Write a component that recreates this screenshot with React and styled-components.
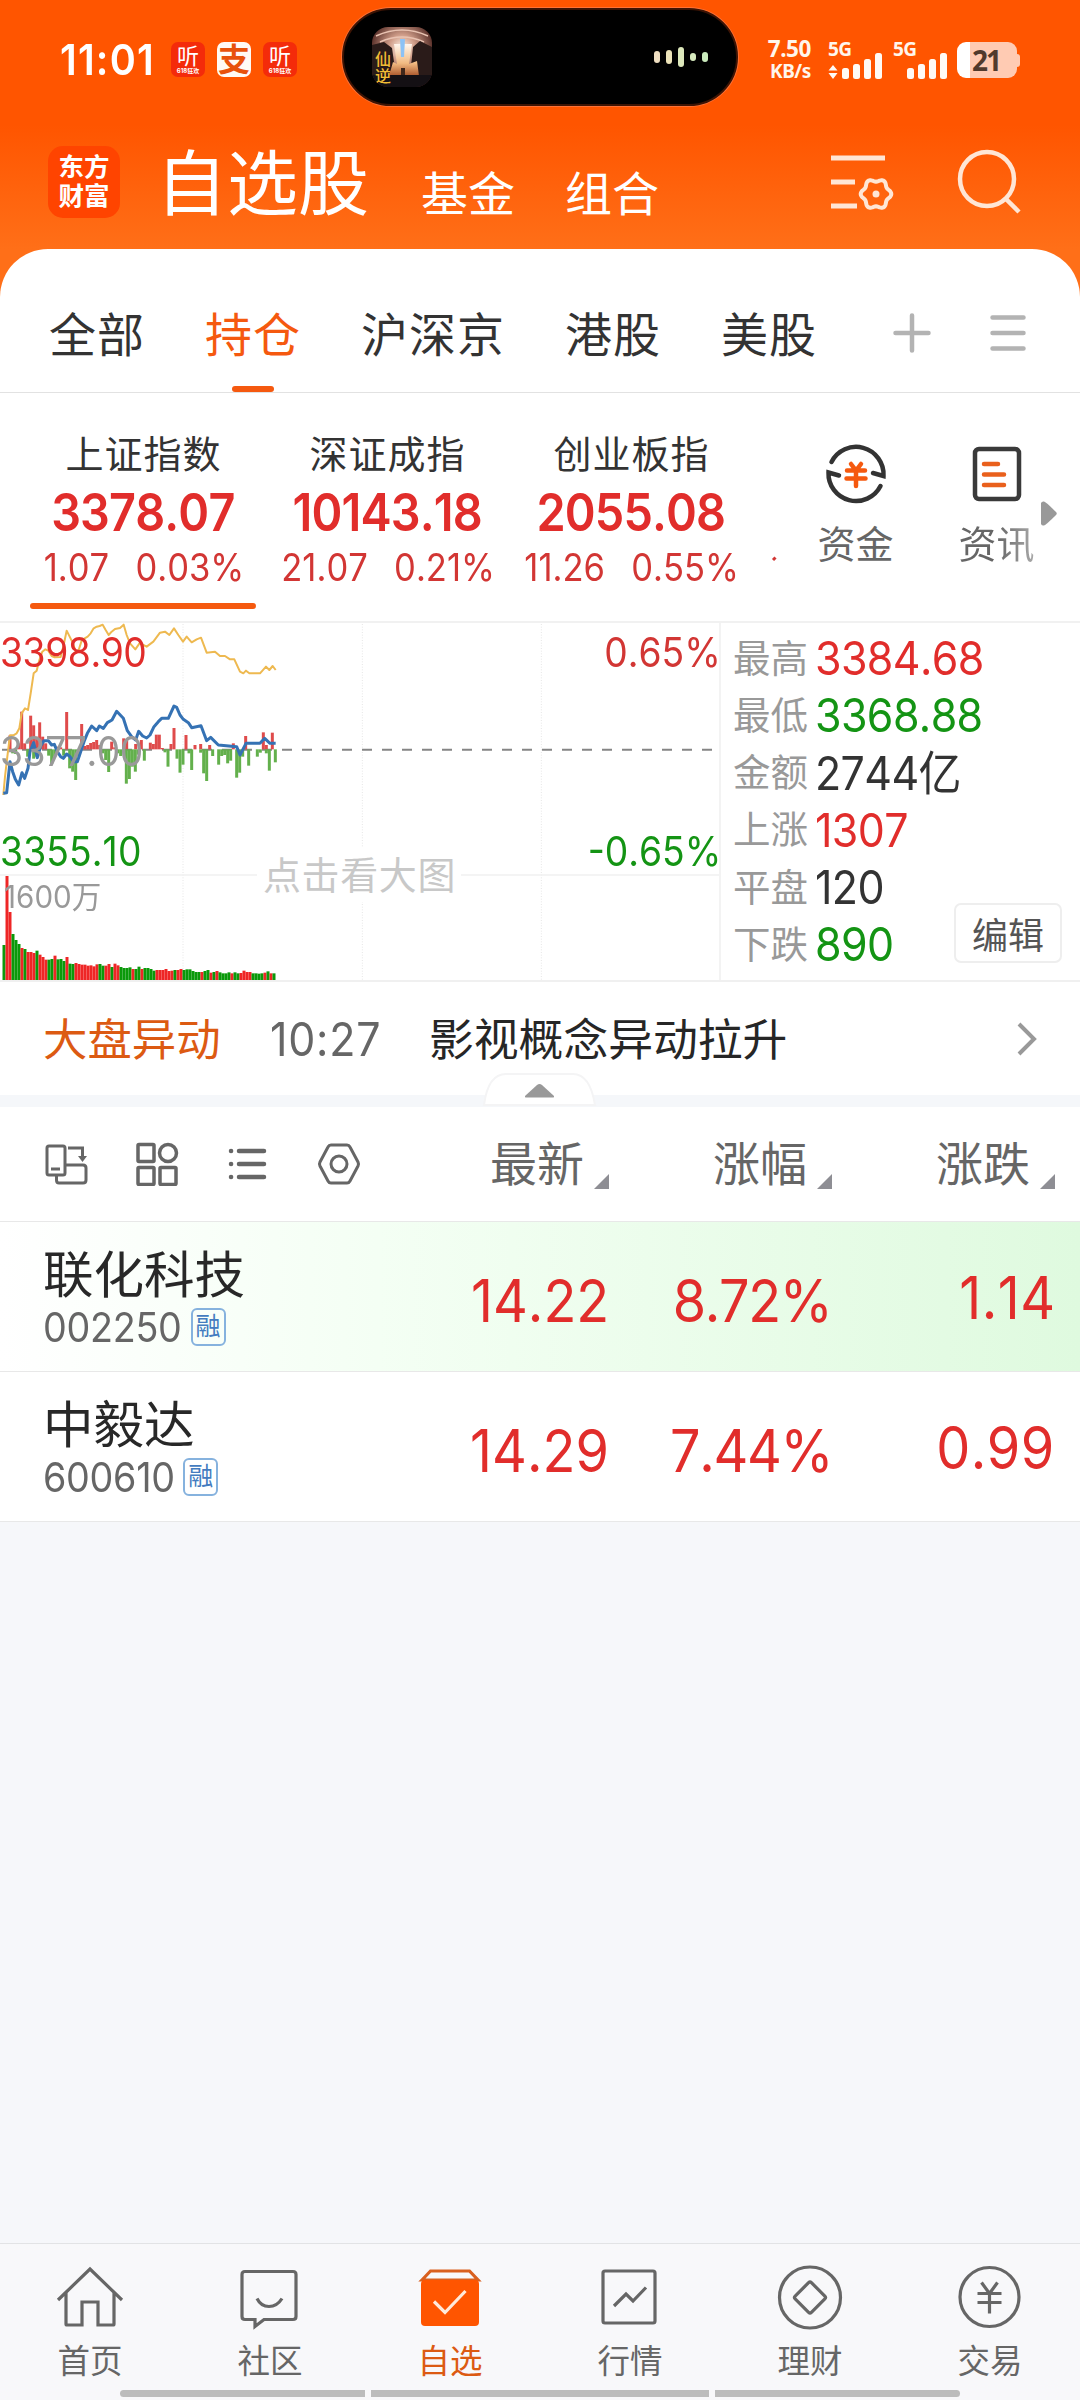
import React, { useState } from 'react';
import styled, { createGlobalStyle, css } from 'styled-components';

const RED = '#e12d2b';
const GREEN = '#149414';
const ORANGE = '#f5590f';

const GlobalStyle = createGlobalStyle`
  * {
    box-sizing: border-box;
  }

  body {
    margin: 0;
    background: #f6f7fa;
    font-family: 'Inter', 'Noto Sans CJK SC', sans-serif;
    line-height: 1;
    color: #333;
  }

  svg {
    display: block;
    flex: none;
  }
`;

const Screen = styled.div`
  width: 1080px;
  height: 2400px;
  display: flex;
  flex-direction: column;
  overflow: hidden;
  white-space: nowrap;
`;

// Condensed figures used for every price and percentage
const Num = styled.span`
  display: inline-block;
  font-size: ${props => props.$size}px;
  font-weight: ${props => props.$weight || 400};
  font-kerning: none;
  letter-spacing: ${props => props.$spacing ?? 0}em;
  color: ${props => props.$color || 'inherit'};
  transform: scaleX(${props => props.$scale || 0.92});
  transform-origin: ${props => props.$origin || 'left'} center;
`;

// Header
const Header = styled.header`
  height: 249px;
  flex: none;
  background: linear-gradient(#ff5500 0, #ff5500 125px, #ff6f18 249px);
  color: white;
`;

const StatusBar = styled.div`
  height: 114px;
  display: grid;
  grid-template-columns: 342px 396px 342px;
  align-items: center;
`;

const StatusLeft = styled.div`
  display: flex;
  align-items: center;
  gap: 12px;
  padding: 5px 0 0 60px;
`;

const Time = styled.div`
  width: 99px;
`;

const NoticeIcon = styled.div`
  width: 34px;
  height: 35px;
  border-radius: 7px;
  display: flex;
  flex-direction: column;
  align-items: center;
  justify-content: center;
  gap: 1px;
  background: ${props => (props.$pay ? '#fffaf5' : '#f42b0a')};
  color: ${props => (props.$pay ? '#e8520c' : 'white')};
  font-size: ${props => (props.$pay ? 32 : 22)}px;
  font-weight: ${props => (props.$pay ? 700 : 400)};

  small {
    font-size: 6px;
    font-weight: 700;
    line-height: 6px;
  }
`;

const Island = styled.div`
  height: 98px;
  border-radius: 49px;
  background: #000;
  border: 2px solid #3d1404;
  box-shadow: 0 0 0 1px #ff7236;
  display: flex;
  align-items: center;
  justify-content: space-between;
  padding: 0 28px;
`;

const StatusRight = styled.div`
  display: flex;
  align-items: flex-start;
  padding: 5px 0 0 29px;
  font-family: 'Noto Sans', sans-serif;
  font-weight: 700;
  color: #fff6ec;
`;

const NetSpeed = styled.div`
  width: 44px;
  height: 36px;
  margin: -2px 17px 0 0;
  display: flex;
  flex-direction: column;
  align-items: flex-end;
  gap: 4px;
  font-size: 22.5px;
  line-height: 18px;
  letter-spacing: -0.4px;

  small {
    font-size: 19px;
    line-height: 18px;
  }
`;

const Signal = styled.div`
  width: 65px;
  height: 36px;
  font-size: 19px;
  line-height: 15px;
  letter-spacing: -0.6px;

  svg {
    margin-top: -4px;
  }
`;

const Battery = styled.div`
  width: 60px;
  height: 36px;
  margin-left: -1px;
  border-radius: 9px;
  background: linear-gradient(90deg, #fff 13px, #ffcbb3 13px);
  color: #523a2c;
  font-size: 28px;
  line-height: 36px;
  padding-left: 15px;
  letter-spacing: -2px;
`;

const BatteryTip = styled.div`
  width: 3px;
  height: 13px;
  margin-top: 12px;
  border-radius: 0 3px 3px 0;
  background: #ffcbb3;
`;

const TitleBar = styled.div`
  height: 135px;
  display: flex;
  align-items: center;
  padding: 0 59px 0 48px;
`;

const Logo = styled.div`
  width: 72px;
  height: 72px;
  margin-right: 36px;
  border-radius: 15px;
  background: #ff4400;
  font-size: 25.5px;
  font-weight: 700;
  line-height: 29px;
  text-align: center;
  padding-top: 6px;
`;

const PageTitle = styled.h1`
  margin: 3px 0 0;
  width: 265px;
  font-size: 71px;
  font-weight: 400;
  line-height: 80px;
`;

const TitleLink = styled.span`
  width: 144px;
  padding-top: 24px;
  font-size: 47px;
  line-height: 50px;
`;

const TitleActions = styled.div`
  margin-left: auto;
  display: flex;
  align-items: center;
  gap: 63px;
`;

// Group tabs
const Card = styled.main`
  flex: none;
  background: linear-gradient(#ff6f18, #ff6f18) top / 100% 48px no-repeat;
`;

const Tabs = styled.nav`
  height: 144px;
  padding: 0 54px 0 49px;
  display: flex;
  align-items: stretch;
  gap: 60px;
  background: white;
  border-radius: 48px 48px 0 0;
  border-bottom: 1px solid #e2e2e2;
`;

const Tab = styled.div`
  display: flex;
  flex-direction: column;
  align-items: center;
  padding-top: 61px;
  font-size: 47px;
  line-height: 50px;
  letter-spacing: 1px;
  cursor: pointer;
  color: ${props => (props.$active ? ORANGE : '#333')};

  &::after {
    content: '';
    width: 42px;
    height: 6px;
    margin-top: 26px;
    border-radius: 3px;
    background: ${props => (props.$active ? ORANGE : 'transparent')};
  }
`;

const TabActions = styled.div`
  display: flex;
  align-items: center;
  gap: 59px;
  margin-left: auto;
  padding-top: 24px;
`;

// Indices
const IndexStrip = styled.section`
  height: 228px;
  display: flex;
  background: white;
  padding-left: 21px;
`;

const IndexCell = styled.div`
  width: 244px;
  display: flex;
  flex-direction: column;
  align-items: center;
  padding-top: 40px;
  font-size: 38px;
  line-height: 42px;

  &::after {
    content: '';
    width: 226px;
    height: 6px;
    margin-top: 17px;
    border-radius: 3px;
    background: ${props => (props.$active ? ORANGE : 'transparent')};
  }
`;

const IndexName = styled.div`
  letter-spacing: 1px;
  padding-left: 1px;
`;

const IndexValue = styled.div`
  height: 50px;
  margin-top: 13px;
  line-height: 50px;
`;

const IndexChange = styled.div`
  height: 38px;
  margin-top: 10px;
  padding-left: 2px;
  line-height: 38px;
  word-spacing: 18px;
`;

const NextIndex = styled.svg`
  margin: 162px 0 0 18px;
`;

const Shortcut = styled.div`
  width: 141px;
  display: flex;
  flex-direction: column;
  align-items: center;
  gap: 18px;
  padding-top: 49px;
  font-size: 38px;
  line-height: 40px;
  color: #666;
`;

const FadedText = styled.span`
  background: linear-gradient(90deg, #666 50%, #aaa);
  background-clip: text;
  color: transparent;
`;

const Shortcuts = styled.div`
  display: flex;
  margin-left: 8px;
`;

const MoreArrow = styled.svg`
  margin: 108px 0 0 -26px;
`;

// Intraday chart and market stats
const Market = styled.section`
  height: 361px;
  display: flex;
  background: white;
  border-top: 2px solid #f1f1f1;
  border-bottom: 2px solid #f0f0f0;
`;

const ChartBox = styled.div`
  position: relative;
  width: 721px;
  border-right: 2px solid #f3f3f3;
`;

const ChartLabel = styled.div`
  position: absolute;
  top: ${props => props.$top}px;
  ${props =>
    props.$right
      ? css`
          right: -2px;
        `
      : css`
          left: ${props.$left || 0}px;
        `}
  line-height: 40px;
`;

const Hint = styled.div`
  position: absolute;
  left: 257px;
  top: 225px;
  width: 204px;
  padding: 6px;
  background: white;
  color: #c8c8c8;
  font-size: 38px;
  line-height: 42px;
  letter-spacing: 0.6px;
`;

const Stats = styled.div`
  flex: 1;
  padding: 7px 0 0 12px;
  position: relative;
`;

const StatRow = styled.div`
  height: 57.2px;
  display: flex;
  align-items: center;
  gap: 7px;
  font-size: 37.5px;
  color: #999;
`;

const EditButton = styled.button`
  position: absolute;
  right: 18px;
  bottom: 17px;
  width: 108px;
  height: 60px;
  padding: 0;
  border: 2px solid #eee;
  border-radius: 7px;
  background: white;
  color: #555;
  font-family: inherit;
  font-size: 36px;
`;

// Market alert
const Alert = styled.section`
  height: 113px;
  display: flex;
  align-items: center;
  padding: 2px 43px 0 43px;
  background: white;
  font-size: 44.8px;
  line-height: 50px;
  color: #262626;
`;

const AlertTag = styled.span`
  width: 227px;
  font-size: 44.4px;
  color: #dc5a12;
`;

const AlertTime = styled.span`
  width: 159px;
`;

const Chevron = styled.svg`
  margin: -2px 0 0 auto;
`;

const Band = styled.div`
  height: 12px;
  background: #f5f7fa;
  position: relative;
`;

const Collapse = styled.svg`
  position: absolute;
  left: 482px;
  top: -23px;
`;

// Stock table
const columns = css`
  display: grid;
  grid-template-columns: 386px 223px 223px 223px;
`;

const TableHead = styled.div`
  ${columns}
  height: 115px;
  align-items: center;
  background: white;
  border-bottom: 1px solid #e8e8e8;
`;

const ToolIcons = styled.div`
  display: flex;
  gap: 47px;
  padding-left: 44px;
`;

const HeadCell = styled.div`
  display: flex;
  justify-content: flex-end;
  align-items: flex-end;
  gap: 10px;
  font-size: 47px;
  line-height: 52px;
  color: #666;
`;

const SortMark = styled.svg`
  margin-bottom: 1px;
`;

const StockRow = styled.div`
  ${columns}
  height: 150px;
  border-bottom: 1px solid #e8e8e8;
  background: ${props => (props.$flash ? 'linear-gradient(90deg, #fff, #f4fff4 35%, #dffadf)' : 'white')};
`;

const StockName = styled.div`
  padding: 25px 0 0 43px;
  font-size: 50.5px;
  line-height: 56px;
  color: #282828;
`;

const StockCode = styled.div`
  display: flex;
  align-items: center;
  height: 42px;
  margin-top: 3px;
  font-size: 41px;
  line-height: 42px;
  color: #666;
`;

const Badge = styled.span`
  width: 35px;
  height: 38px;
  margin-left: -3px;
  border: 2px solid #86b2de;
  border-radius: 6px;
  color: #447cc0;
  font-size: 25px;
  line-height: 33px;
  text-align: center;
`;

const Price = styled.div`
  padding-top: ${props => (props.$raised ? 46 : 49)}px;
  text-align: right;
  line-height: 59px;
`;

// Bottom navigation
const BottomNav = styled.footer`
  height: 157px;
  flex: none;
  margin-top: auto;
  display: flex;
  flex-direction: column;
  align-items: center;
  border-top: 1px solid #e2e3e5;
  background: #f8f8fa;
`;

const NavItems = styled.div`
  display: grid;
  grid-template-columns: repeat(6, 180px);
  height: 146px;
`;

const NavItem = styled.div`
  display: flex;
  flex-direction: column;
  align-items: center;
  padding-top: 18px;
  gap: 10px;
  font-size: 32.5px;
  line-height: 36px;
  cursor: pointer;
  color: ${props => (props.$active ? '#dc5a12' : '#666')};
`;

const HomeBar = styled.div`
  display: flex;
  gap: 6px;

  i {
    width: 245px;
    height: 7px;
    background: #bcbcbc;
  }

  i:nth-child(2) {
    width: 338px;
  }

  i:first-child {
    border-radius: 4px 0 0 4px;
  }

  i:last-child {
    border-radius: 0 4px 4px 0;
  }
`;

const TABS = ['全部', '持仓', '沪深京', '港股', '美股'];

const INDICES = [
  { name: '上证指数', value: '3378.07', change: '1.07', percent: '0.03%' },
  { name: '深证成指', value: '10143.18', change: '21.07', percent: '0.21%' },
  { name: '创业板指', value: '2055.08', change: '11.26', percent: '0.55%' }
];

const STATS = [
  { label: '最高', value: '3384.68', color: RED },
  { label: '最低', value: '3368.88', color: GREEN },
  { label: '金额', value: '2744', unit: '亿', color: '#333' },
  { label: '上涨', value: '1307', color: RED },
  { label: '平盘', value: '120', color: '#333' },
  { label: '下跌', value: '890', color: GREEN }
];

const STOCKS = [
  { name: '联化科技', code: '002250', price: '14.22', percent: '8.72%', change: '1.14', flash: true },
  { name: '中毅达', code: '600610', price: '14.29', percent: '7.44%', change: '0.99' }
];

// Intraday series, in thirds of a pixel
const AVERAGE_LINE =
  '10,555 15,500 22,440 30,376 40,376 50,370 58,355 65,310 75,295 84,300 92,250 101,190 110,182 118,150 127,125 136,118 145,122 155,138 164,142 182,141 191,105 200,62 209,80 218,98 227,125 236,120 245,92 254,85 263,80 272,70 281,55 290,50 299,48 308,44 317,60 326,75 335,65 345,57 360,54 371,44 380,75 390,100 406,118 420,98 430,105 440,110 460,95 480,68 495,65 508,75 522,55 535,75 549,95 560,80 575,97 590,88 603,83 620,128 645,125 660,138 675,138 690,148 703,148 720,185 730,190 738,182 748,190 780,190 798,170 808,180 818,168 827,180';
const PRICE_LINE =
  '10,550 20,548 30,455 38,485 46,508 56,525 66,488 74,505 84,475 90,425 101,398 112,443 122,408 132,392 145,392 155,405 163,403 172,425 182,440 190,445 200,432 210,440 220,455 232,455 242,425 252,395 262,370 275,348 290,362 298,348 310,355 322,338 336,330 350,304 370,325 382,362 395,380 407,390 416,364 428,378 440,384 450,375 462,350 475,335 485,325 505,325 522,288 530,292 540,315 550,328 565,338 575,353 603,347 620,392 632,382 655,405 710,410 720,435 738,400 780,400 794,385 810,400 827,400';

const STRENGTH = [
  [30, 376], [56, 400], [65, 305], [74, 400], [92, 317], [101, 346], [110, 380], [119, 337], [128, 380], [137, 400],
  [173, 410], [182, 412], [200, 306], [245, 342], [254, 408], [263, 405], [272, 399], [281, 396], [290, 390], [299, 405],
  [335, 395], [344, 412], [371, 385], [380, 390], [407, 402], [424, 390], [451, 398], [460, 402], [469, 374], [478, 374],
  [487, 414], [513, 402], [522, 354], [558, 375], [585, 405], [602, 402], [629, 405], [700, 400], [737, 378],
  [790, 367], [799, 405], [817, 368],
  [38, 430], [47, 432], [83, 440], [101, 446], [110, 440], [146, 437], [155, 462], [164, 440], [191, 437], [209, 475],
  [218, 485], [227, 510], [236, 440], [308, 430], [317, 450], [326, 486], [353, 430], [362, 438], [379, 521], [388, 507],
  [397, 470], [406, 485], [415, 434], [433, 452], [495, 427], [504, 470], [531, 446], [540, 488], [549, 464],
  [567, 430], [575, 480], [602, 428], [611, 490], [620, 513], [638, 438], [656, 464], [665, 438], [674, 435],
  [683, 460], [692, 452], [710, 503], [719, 488], [728, 440], [746, 467], [772, 440], [781, 428], [799, 430],
  [808, 482], [826, 457]
];

const VOLUME = [
  105, 312, 204, 138, 120, 108, 96, 93, 84, 84, 81, 88, 76, 69, 61, 61, 63, 73, 62, 63, 57, 69, 49, 48, 51, 48, 46, 46,
  43, 44, 41, 47, 48, 43, 43, 48, 39, 49, 44, 39, 36, 36, 38, 33, 33, 40, 33, 36, 36, 33, 28, 30, 30, 30, 33, 27, 28,
  30, 30, 33, 30, 32, 32, 27, 24, 24, 24, 27, 30, 22, 24, 27, 23, 20, 20, 23, 20, 23, 20, 21, 28, 24, 24, 20, 20, 19,
  20, 22, 26, 20, 20
];
const VOLUME_SIDES =
  'grrgggrgrrrgrrrggrgggrggrrrrrrrrggrrgrrggggrggrggggrrrrrrgrrggggggrggrgrggggrggrrrrggggrgrg';

const IntradayChart = () => (
  <svg width="719" height="357" viewBox="0 39 2157 1071">
    <g stroke="#e6e6e6" strokeWidth="3" strokeDasharray="3 5">
      <path d="M549 42V1110M1087 42V1110M1624 42V1110" />
    </g>
    <path d="M0 795H2157" stroke="#f0f0f0" strokeWidth="5" />
    <path d="M0 419H2157" stroke="#858585" strokeWidth="6" strokeDasharray="30 30" strokeDashoffset="-6" />
    {STRENGTH.map(([x, y], i) => (
      <path key={i} d={`M${x} 418V${y}`} stroke={y < 418 ? '#df4b4b' : '#63b04c'} strokeWidth="9" />
    ))}
    {VOLUME.map((height, i) => (
      <path
        key={i}
        d={`M${12 + i * 9} 1110v-${height}`}
        stroke={VOLUME_SIDES[i] === 'r' ? '#ee2626' : '#0a990a'}
        strokeWidth="9"
      />
    ))}
    <polyline points={AVERAGE_LINE} fill="none" stroke="#eeb950" strokeWidth="6" strokeLinejoin="round" />
    <polyline points={PRICE_LINE} fill="none" stroke="#3572b4" strokeWidth="9" strokeLinejoin="round" />
  </svg>
);

const SignalBars = ({ arrows }) => (
  <svg width="56" height="26" viewBox="0 0 56 26" fill="#fffaf5">
    {arrows && <path d="M5 12l4.500 5.500h-9zM5 26l4.500-6h-9z" />}
    <rect x="14" y="15" width="7" height="11" rx="2.500" />
    <rect x="25" y="11" width="7" height="15" rx="2.500" />
    <rect x="36" y="6" width="7" height="20" rx="2.500" />
    <rect x="47" y="0" width="7" height="26" rx="2.500" />
  </svg>
);

const CoverArt = () => (
  <svg width="60" height="60" viewBox="0 0 60 60">
    <defs>
      <clipPath id="cover">
        <rect width="60" height="60" rx="16" />
      </clipPath>
      <radialGradient id="glow" cx="0.5" cy="0.35" r="0.55">
        <stop offset="0" stopColor="#fff4e8" />
        <stop offset="0.4" stopColor="#cf9c88" />
        <stop offset="1" stopColor="#4c241f" />
      </radialGradient>
      <linearGradient id="fire" x1="0" y1="0" x2="0" y2="1">
        <stop offset="0" stopColor="#fff6ee" />
        <stop offset="0.6" stopColor="#f2bb82" />
        <stop offset="1" stopColor="#a9552a" />
      </linearGradient>
    </defs>
    <g clipPath="url(#cover)">
      <rect width="60" height="60" fill="url(#glow)" />
      <path d="M4 9q26-12 52 0M8 15q22-10 44 0" fill="none" stroke="#e9c3b2" strokeWidth="1.500" />
      <path d="M0 18l12-3 8 6 4 28H0zM60 20l-12-6-7 6-3 29h22z" fill="#2a1b19" />
      <path d="M22 17h18l-3 20 8-3 2 15H17l4-14 4 2z" fill="url(#fire)" />
      <path d="M28 12h5l-1 18h-3z" fill="#8cc2f5" />
      <path d="M0 48h60v12H0z" fill="#141014" />
      <path d="M29 41h4v7h-4z" fill="#40271a" />
      <g fill="#f2bd35" fontSize="16" fontWeight="500">
        <text x="3" y="38">仙</text>
        <text x="3" y="55">逆</text>
      </g>
    </g>
  </svg>
);

const SoundWave = () => (
  <svg width="54" height="20" viewBox="0 0 54 20">
    <rect x="0" y="4" width="6" height="12" rx="3" fill="#f0dfc2" />
    <rect x="12" y="3" width="6" height="14" rx="3" fill="#ece3b9" />
    <rect x="24" y="0" width="6" height="20" rx="3" fill="#dde8bb" />
    <rect x="36" y="6" width="6" height="8" rx="3" fill="#d6e9bd" />
    <rect x="48" y="5" width="6" height="10" rx="3" fill="#cbebbd" />
  </svg>
);

// Six-lobed gear outline
const GEAR_POINTS = Array.from({ length: 72 }, (_, i) => {
  const angle = (i * Math.PI) / 36;
  const radius = 13.8 + 1.5 * Math.cos(6 * angle);
  return `${(45 + radius * Math.cos(angle)).toFixed(2)},${(44 + radius * Math.sin(angle)).toFixed(2)}`;
}).join(' ');

const NAV_ITEMS = [
  { label: '首页', icon: <path d="M4 38L36 7l32 31M12 31v31q0 1 1 1h15V40h16v23h15q1 0 1-1V31" /> },
  {
    label: '社区',
    icon: (
      <path d="M11 9.500h48q3 0 3 3v42q0 3-3 3H30L21 64.500V57.500H11q-3 0-3-3v-42q0-3 3-3zM23 36.500q4 8 12 8t13-8" />
    )
  },
  {
    label: '自选',
    icon: (
      <>
        <path d="M8 18l8.500-9h39L64 18z" stroke="#d9601f" fill="#f8f8fa" />
        <rect x="7" y="18" width="58" height="46" rx="4" fill="#ff5500" stroke="none" />
        <path d="M20 39.500L31 50.500L51.500 29" stroke="#ffeada" />
      </>
    )
  },
  {
    label: '行情',
    icon: (
      <>
        <rect x="9" y="9" width="52" height="52" rx="2" />
        <path d="M20 44l12-12 7 7 13-13.500" />
      </>
    )
  },
  {
    label: '理财',
    icon: (
      <>
        <circle cx="36" cy="35.500" r="30.500" />
        <rect x="24.500" y="24" width="23" height="23" rx="2" transform="rotate(45 36 35.500)" />
      </>
    )
  },
  {
    label: '交易',
    icon: (
      <>
        <circle cx="35.500" cy="35" r="29.500" />
        <path d="M27.500 20.500l8 11 8-11M23.500 31.500h24M23.500 40.500h24M35.500 31v20.500" />
      </>
    )
  }
];

const App = () => {
  const [activeTab, setActiveTab] = useState('持仓');
  const [activeNav, setActiveNav] = useState('自选');

  return (
    <Screen lang="zh-CN">
      <GlobalStyle />
      <Header>
        <StatusBar>
          <StatusLeft>
            <Time>
              <Num $size={43} $weight={600} $spacing={0.03}>11:01</Num>
            </Time>
            <NoticeIcon>听<small>618狂欢</small></NoticeIcon>
            <NoticeIcon $pay>支</NoticeIcon>
            <NoticeIcon>听<small>618狂欢</small></NoticeIcon>
          </StatusLeft>
          <Island>
            <CoverArt />
            <SoundWave />
          </Island>
          <StatusRight>
            <NetSpeed>
              7.50
              <small>KB/s</small>
            </NetSpeed>
            <Signal>
              5G
              <SignalBars arrows />
            </Signal>
            <Signal>
              5G
              <SignalBars />
            </Signal>
            <Battery>21</Battery>
            <BatteryTip />
          </StatusRight>
        </StatusBar>

        <TitleBar>
          <Logo>东方<br />财富</Logo>
          <PageTitle>自选股</PageTitle>
          <TitleLink>基金</TitleLink>
          <TitleLink>组合</TitleLink>
          <TitleActions>
            <svg width="63" height="64" viewBox="0 0 63 64" fill="none" stroke="#ffe6d5" strokeWidth="5">
              <path d="M0 8h54M0 32h24M0 56h26" />
              <polygon points={GEAR_POINTS} strokeWidth="4" strokeLinejoin="round" />
              <circle cx="45" cy="44" r="3.500" fill="#ffe6d5" stroke="none" />
            </svg>
            <svg width="64" height="66" viewBox="0 0 64 66" fill="none" stroke="#ffe6d5" strokeWidth="4.500">
              <circle cx="30" cy="30" r="27" />
              <path d="M48 49l14 14" />
            </svg>
          </TitleActions>
        </TitleBar>
      </Header>

      <Card>
        <Tabs>
          {TABS.map(tab => (
            <Tab key={tab} $active={tab === activeTab} onClick={() => setActiveTab(tab)}>
              {tab}
            </Tab>
          ))}
          <TabActions>
            <svg width="38" height="40" viewBox="0 0 38 40" stroke="#b3b3b3" strokeWidth="4.500" strokeLinecap="round">
              <path d="M2.500 20h33M19 2.500v35" />
            </svg>
            <svg width="36" height="40" viewBox="0 0 36 40" stroke="#b3b3b3" strokeWidth="4.500" strokeLinecap="round">
              <path d="M2.500 4.500h31M2.500 20h31M2.500 35.500h31" />
            </svg>
          </TabActions>
        </Tabs>

        <IndexStrip>
          {INDICES.map((item, i) => (
            <IndexCell key={item.name} $active={i === 0}>
              <IndexName>{item.name}</IndexName>
              <IndexValue>
                <Num $size={52} $weight={600} $color={RED} $origin="center" $scale={0.9} $spacing={-0.018}>
                  {item.value}
                </Num>
              </IndexValue>
              <IndexChange>
                <Num $size={37.6} $color="#d23634" $origin="center">{item.change} {item.percent}</Num>
              </IndexChange>
            </IndexCell>
          ))}
          <NextIndex width="6" height="8" viewBox="0 0 6 8">
            <path d="M2 5l2.500-2.500" stroke="#d23634" strokeWidth="3" />
          </NextIndex>
          <Shortcuts>
            <Shortcut>
              <svg width="64" height="64" viewBox="0 0 64 64" fill="none" stroke="#333" strokeWidth="4.500" strokeLinecap="round">
                <path d="M7.500 20A27.500 27.500 0 0 1 59.500 34L49 31" strokeLinejoin="miter" />
                <path d="M56.500 44A27.500 27.500 0 0 1 4.500 30.500L15 33.500" />
                <path d="M27 22l5 6.500 5-6.500M23 28.500h18M22.500 36.500h19M32 28v16" stroke={ORANGE} />
              </svg>
              资金
            </Shortcut>
            <Shortcut>
              <svg width="64" height="64" viewBox="0 0 64 64" fill="none" strokeWidth="4.500" strokeLinecap="round">
                <rect x="10" y="7" width="44" height="50" rx="4" stroke="#3a3a3a" />
                <path d="M19 22h14M19 32.500h20M19 43h20" stroke="#e9601c" />
              </svg>
              <FadedText>资讯</FadedText>
            </Shortcut>
          </Shortcuts>
          <MoreArrow width="16" height="25" viewBox="0 0 16 25" fill="#999">
            <path d="M0 2q1-2 3-1.500Q5 1 15 11q1.500 1.500 0 3Q5 24 3 24.500Q1 25 0 23z" />
          </MoreArrow>
        </IndexStrip>

        <Market>
          <ChartBox>
            <IntradayChart />
            <ChartLabel $top={10}><Num $size={40.5} $color={RED} $spacing={-0.012}>3398.90</Num></ChartLabel>
            <ChartLabel $top={109}><Num $size={40.5} $color="#999" $spacing={-0.012}>3377.00</Num></ChartLabel>
            <ChartLabel $top={209}><Num $size={40.5} $color={GREEN} $spacing={0.003}>3355.10</Num></ChartLabel>
            <ChartLabel $top={10} $right><Num $size={40.5} $color="#d23634" $origin="right">0.65%</Num></ChartLabel>
            <ChartLabel $top={209} $right><Num $size={40.5} $color={GREEN} $origin="right">-0.65%</Num></ChartLabel>
            <ChartLabel $top={254} $left={4}><Num $size={30.5} $color="#999" $scale={0.97}>1600万</Num></ChartLabel>
            <Hint>点击看大图</Hint>
          </ChartBox>
          <Stats>
            {STATS.map(stat => (
              <StatRow key={stat.label}>
                {stat.label}
                <Num $size={46.7} $color={stat.color} $spacing={-0.014}>{stat.value}{stat.unit}</Num>
              </StatRow>
            ))}
            <EditButton>编辑</EditButton>
          </Stats>
        </Market>

        <Alert>
          <AlertTag>大盘异动</AlertTag>
          <AlertTime><Num $size={46.7} $color="#666" $spacing={0.018}>10:27</Num></AlertTime>
          影视概念异动拉升
          <Chevron width="20" height="34" viewBox="0 0 20 34" fill="none" stroke="#999" strokeWidth="4">
            <path d="M2 2l15 15L2 32" />
          </Chevron>
        </Alert>
        <Band>
          <Collapse width="115" height="34" viewBox="0 0 115 34">
            <path d="M2 33Q6 2 24 2h67Q108 2 113 33z" fill="white" stroke="#f4f4f5" strokeWidth="2" />
            <path d="M43 24l12-11q2.500-2 5 0l12 11q.5 1.500-1 1.500H44q-1.500 0-1-1.500z" fill="#999" />
          </Collapse>
        </Band>

        <TableHead>
          <ToolIcons>
            <svg width="44" height="44" viewBox="0 0 44 44" fill="none" stroke="#666" strokeWidth="3">
              <rect x="3" y="4" width="18" height="29" rx="2" />
              <path d="M7 27h9M24 6h14.500v9M21 23h18q3 0 3 3v12q0 3-3 3H15q-2.500 0-2.500-3v-5" />
              <path d="M34 14h9l-4.500 6z" fill="#666" stroke="none" />
            </svg>
            <svg width="44" height="44" viewBox="0 0 44 44" fill="none" stroke="#666" strokeWidth="3.500">
              <rect x="3" y="2.500" width="16" height="17" rx="1" />
              <circle cx="33" cy="11" r="8.500" />
              <rect x="3" y="25.500" width="16" height="17" rx="1" />
              <rect x="25" y="25.500" width="16" height="17" rx="1" />
            </svg>
            <svg width="44" height="44" viewBox="0 0 44 44" fill="none" stroke="#666" strokeWidth="4.500" strokeLinecap="round">
              <path d="M13 9h25M13 22h25M13 35h25M5 9h.1M5 22h.1M5 35h.1" />
            </svg>
            <svg width="44" height="44" viewBox="0 0 44 44" fill="none" stroke="#666" strokeWidth="3" strokeLinejoin="round">
              <path d="M14 3h16q2 0 3 2l8 15q1 2 0 4l-8 15q-1 2-3 2H14q-2 0-3-2L3 24q-1-2 0-4l8-15q1-2 3-2z" />
              <circle cx="22" cy="22" r="8" />
            </svg>
          </ToolIcons>
          {['最新', '涨幅', '涨跌'].map(label => (
            <HeadCell key={label}>
              {label}
              <SortMark width="15" height="15" viewBox="0 0 15 15">
                <path d="M15 0v15H0z" fill="#8e8e94" />
              </SortMark>
            </HeadCell>
          ))}
        </TableHead>

        {STOCKS.map(stock => (
          <StockRow key={stock.code} $flash={stock.flash}>
            <StockName>
              {stock.name}
              <StockCode>
                <Num $size={41} $spacing={-0.008}>{stock.code}</Num>
                <Badge>融</Badge>
              </StockCode>
            </StockName>
            <Price><Num $size={58.7} $color={RED} $origin="right">{stock.price}</Num></Price>
            <Price><Num $size={58.7} $color={RED} $origin="right" $spacing={-0.025}>{stock.percent}</Num></Price>
            <Price $raised><Num $size={58.7} $color={RED} $origin="right" $spacing={0.008}>{stock.change}</Num></Price>
          </StockRow>
        ))}
      </Card>

      <BottomNav>
        <NavItems>
          {NAV_ITEMS.map(item => (
            <NavItem key={item.label} $active={item.label === activeNav} onClick={() => setActiveNav(item.label)}>
              <svg width="72" height="72" viewBox="0 0 72 72" fill="none" stroke="#666" strokeWidth="3.200">
                {item.icon}
              </svg>
              {item.label}
            </NavItem>
          ))}
        </NavItems>
        <HomeBar>
          <i />
          <i />
          <i />
        </HomeBar>
      </BottomNav>
    </Screen>
  );
};

export default App;
